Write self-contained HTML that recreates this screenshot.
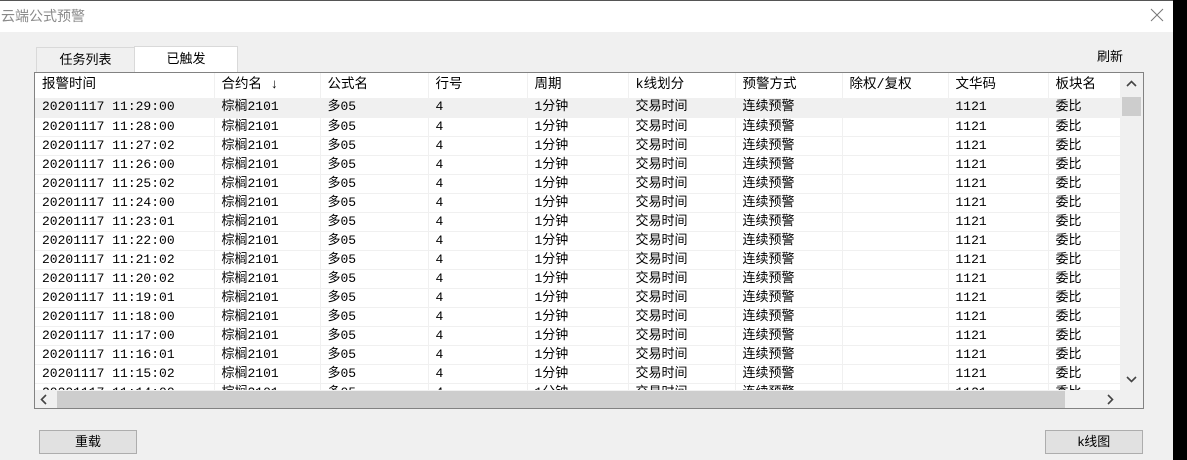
<!DOCTYPE html>
<html><head><meta charset="utf-8"><style>
*{margin:0;padding:0;box-sizing:border-box}
body{width:1187px;height:460px;background:#000;position:relative;overflow:hidden;font-family:"Liberation Sans","Noto Sans CJK SC",sans-serif;font-size:13px;color:#000}
#win{position:absolute;left:0;top:0;width:1173px;height:460px;background:#f0f0f0;border-top:1px solid #555}
#title{position:absolute;left:0;top:0;width:1173px;height:31px;background:#fff;color:#8a8a8a;font-size:14px;line-height:31px;padding-left:1px}
#close{position:absolute;right:8px;top:6px;width:16px;height:16px}
.tab{position:absolute;height:26px;font-size:13px;text-align:center;line-height:24px;border:1px solid #d9d9d9;border-bottom:none}
#grid{position:absolute;left:34px;top:71px;width:1110px;height:337px;border:1px solid #828282;background:#fff;overflow:hidden}
table{border-collapse:collapse;table-layout:fixed;position:absolute;left:0;top:0}
td{height:19px;padding:0 0 0 7px;border-right:1px solid #f0f0f0;border-bottom:1px solid #f0f0f0;white-space:nowrap;overflow:hidden;font-size:13px;line-height:18px;font-family:"Liberation Mono","Noto Sans CJK SC",monospace}
tr.h td{height:25px;line-height:24px;border-right:1px solid #f0f0f0;border-bottom:none;font-size:13.5px}
tr.s td{background:#f0f0f0}
#vs{position:absolute;left:1085px;top:0;width:23px;height:318px;background:#f0f0f0}
#hs{position:absolute;left:0;top:317px;width:1108px;height:19px;background:#f0f0f0}
.btn{position:absolute;top:429px;width:98px;height:24px;border:1px solid #adadad;background:#e1e1e1;text-align:center;line-height:22px;font-size:13px}
</style></head><body>
<div id="win">
<div id="title">云端公式预警
<svg id="close" viewBox="0 0 16 16"><path d="M2 2L14 14M14 2L2 14" stroke="#777" stroke-width="1"/></svg></div>
<div class="tab" style="left:36px;top:46px;width:99px;background:#f0f0f0">任务列表</div>
<div class="tab" style="left:134px;top:45px;width:104px;background:#fff;height:27px">已触发</div>
<div style="position:absolute;left:1097px;top:45px;font-size:13px">刷新</div>
<div id="grid">
<table>
<colgroup><col style="width:179px"><col style="width:106px"><col style="width:108px"><col style="width:99px"><col style="width:101px"><col style="width:107px"><col style="width:107px"><col style="width:106px"><col style="width:100px"><col style="width:72px"></colgroup>
<tr class="h"><td>报警时间</td><td>合约名 ↓</td><td>公式名</td><td>行号</td><td>周期</td><td>k线划分</td><td>预警方式</td><td>除权/复权</td><td>文华码</td><td>板块名</td></tr>
<tr class="s"><td>20201117 11:29:00</td><td>棕榈2101</td><td>多05</td><td>4</td><td>1分钟</td><td>交易时间</td><td>连续预警</td><td></td><td>1121</td><td>委比</td></tr>
<tr><td>20201117 11:28:00</td><td>棕榈2101</td><td>多05</td><td>4</td><td>1分钟</td><td>交易时间</td><td>连续预警</td><td></td><td>1121</td><td>委比</td></tr>
<tr><td>20201117 11:27:02</td><td>棕榈2101</td><td>多05</td><td>4</td><td>1分钟</td><td>交易时间</td><td>连续预警</td><td></td><td>1121</td><td>委比</td></tr>
<tr><td>20201117 11:26:00</td><td>棕榈2101</td><td>多05</td><td>4</td><td>1分钟</td><td>交易时间</td><td>连续预警</td><td></td><td>1121</td><td>委比</td></tr>
<tr><td>20201117 11:25:02</td><td>棕榈2101</td><td>多05</td><td>4</td><td>1分钟</td><td>交易时间</td><td>连续预警</td><td></td><td>1121</td><td>委比</td></tr>
<tr><td>20201117 11:24:00</td><td>棕榈2101</td><td>多05</td><td>4</td><td>1分钟</td><td>交易时间</td><td>连续预警</td><td></td><td>1121</td><td>委比</td></tr>
<tr><td>20201117 11:23:01</td><td>棕榈2101</td><td>多05</td><td>4</td><td>1分钟</td><td>交易时间</td><td>连续预警</td><td></td><td>1121</td><td>委比</td></tr>
<tr><td>20201117 11:22:00</td><td>棕榈2101</td><td>多05</td><td>4</td><td>1分钟</td><td>交易时间</td><td>连续预警</td><td></td><td>1121</td><td>委比</td></tr>
<tr><td>20201117 11:21:02</td><td>棕榈2101</td><td>多05</td><td>4</td><td>1分钟</td><td>交易时间</td><td>连续预警</td><td></td><td>1121</td><td>委比</td></tr>
<tr><td>20201117 11:20:02</td><td>棕榈2101</td><td>多05</td><td>4</td><td>1分钟</td><td>交易时间</td><td>连续预警</td><td></td><td>1121</td><td>委比</td></tr>
<tr><td>20201117 11:19:01</td><td>棕榈2101</td><td>多05</td><td>4</td><td>1分钟</td><td>交易时间</td><td>连续预警</td><td></td><td>1121</td><td>委比</td></tr>
<tr><td>20201117 11:18:00</td><td>棕榈2101</td><td>多05</td><td>4</td><td>1分钟</td><td>交易时间</td><td>连续预警</td><td></td><td>1121</td><td>委比</td></tr>
<tr><td>20201117 11:17:00</td><td>棕榈2101</td><td>多05</td><td>4</td><td>1分钟</td><td>交易时间</td><td>连续预警</td><td></td><td>1121</td><td>委比</td></tr>
<tr><td>20201117 11:16:01</td><td>棕榈2101</td><td>多05</td><td>4</td><td>1分钟</td><td>交易时间</td><td>连续预警</td><td></td><td>1121</td><td>委比</td></tr>
<tr><td>20201117 11:15:02</td><td>棕榈2101</td><td>多05</td><td>4</td><td>1分钟</td><td>交易时间</td><td>连续预警</td><td></td><td>1121</td><td>委比</td></tr>
<tr><td>20201117 11:14:00</td><td>棕榈2101</td><td>多05</td><td>4</td><td>1分钟</td><td>交易时间</td><td>连续预警</td><td></td><td>1121</td><td>委比</td></tr>
</table>
<div id="vs">
<svg style="position:absolute;left:6px;top:7px" width="11" height="8" viewBox="0 0 11 8"><path d="M1 6L5.5 1.5L10 6" fill="none" stroke="#444" stroke-width="1.6"/></svg>
<div style="position:absolute;left:2px;top:24px;width:19px;height:19px;background:#cdcdcd"></div>
<svg style="position:absolute;left:6px;top:302px" width="11" height="8" viewBox="0 0 11 8"><path d="M1 2L5.5 6.5L10 2" fill="none" stroke="#444" stroke-width="1.6"/></svg>
</div>
<div id="hs">
<svg style="position:absolute;left:5px;top:4px" width="8" height="11" viewBox="0 0 8 11"><path d="M6 1L1.5 5.5L6 10" fill="none" stroke="#444" stroke-width="1.6"/></svg>
<div style="position:absolute;left:22px;top:1px;width:1008px;height:17px;background:#cdcdcd"></div>
<svg style="position:absolute;left:1071px;top:4px" width="8" height="11" viewBox="0 0 8 11"><path d="M2 1L6.5 5.5L2 10" fill="none" stroke="#444" stroke-width="1.6"/></svg>
</div>
</div>
<div class="btn" style="left:39px">重载</div>
<div class="btn" style="left:1045px">k线图</div>
</div>
</body></html>
